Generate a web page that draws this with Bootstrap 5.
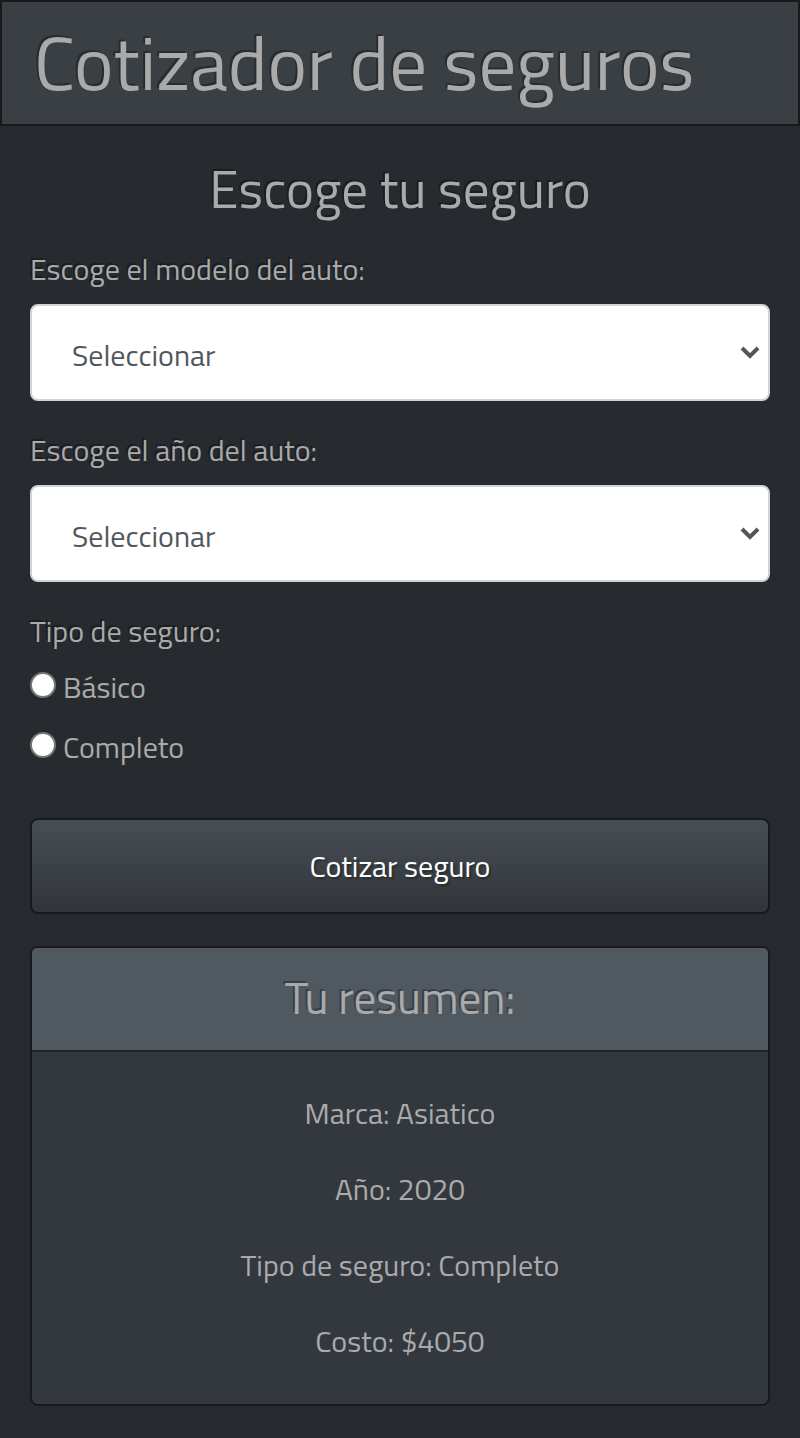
<!DOCTYPE html>
<html lang="es">
<head>
<meta charset="utf-8">
<meta name="viewport" content="width=device-width, initial-scale=1">
<title>Cotizador de seguros</title>
<link href="https://cdn.jsdelivr.net/npm/bootstrap@5.3.0/dist/css/bootstrap.min.css" rel="stylesheet">
<style>
  body {
    background: #272b30;
    color: #aaa;
    font-family: "Titillium Web", Roboto, "Open Sans", sans-serif;
    font-size: 30px;
    line-height: 44px;
  }
  h1, h2, h3, .form-label, .radio-title { text-shadow: -2px -2px 0 rgba(0, 0, 0, .3); }
  h1, h2, h3 { font-weight: 400; }
  .top-bar { background: #3a3f44; border: 2px solid #17191c; padding: 15px 32px 17px; }
  .top-bar h1 { font-size: 75px; line-height: 90px; }
  .quote-page { padding: 30px; }
  .quote-page h2 { font-size: 53px; line-height: 66px; margin-bottom: 25px; }
  .form-label, .radio-title { font-size: 30px; line-height: 44px; }
  .form-label { margin-bottom: 13px; }
  .radio-title { margin-bottom: 12px; }
  .quote-field { margin-bottom: 27px; }
  .quote-field .form-select {
    height: 97px;
    padding: 6px 40px 0;
    border: 2px solid #ced4da;
    border-radius: 8px;
    color: #52575c;
    font-size: 30px;
    background: #fff url("data:image/svg+xml,%3Csvg xmlns='http://www.w3.org/2000/svg' viewBox='0 0 20 13'%3E%3Cpath d='M2 2 10 10 18 2' fill='none' stroke='%2352575c' stroke-width='4'/%3E%3C/svg%3E") no-repeat right 8px center / 20px 13px;
  }
  .quote-radio { min-height: 44px; margin-bottom: 16px; gap: 7px; }
  .quote-radio .form-check-input {
    width: 26px; height: 26px; margin: 0 0 4px; border: 2px solid #767676; background-color: #fff;
  }
  .quote-btn {
    margin-top: 33px;
    padding: 23px;
    border: 2px solid #17191c;
    border-radius: 8px;
    color: #fff;
    font-size: 30px;
    line-height: 46px;
    background-image: linear-gradient(#484e55, #3a3f44 60%, #313539);
    text-shadow: 2px 2px 2px rgba(0, 0, 0, .3);
  }
  .quote-btn:hover { color: #fff; background-color: #3a3f44; }
  .summary-card {
    margin-top: 32px;
    background: #32383e;
    border: 2px solid #17191c;
    border-radius: 8px;
    color: #aaa;
  }
  .summary-card .card-header { background: #515960; border-bottom: 2px solid #202327; padding: 22px 24px 26px; }
  .summary-card h3 { font-size: 45px; line-height: 54px; }
  .summary-card .card-body { padding: 39px 24px 41px; }
  .summary-card p { margin-bottom: 32px; }
  .summary-card p:last-child { margin-bottom: 0; }
</style>
</head>
<body>
<header class="top-bar"><h1 class="mb-0">Cotizador de seguros</h1></header>
<main class="quote-page container-fluid">
  <h2 class="text-center">Escoge tu seguro</h2>
  <form>
    <div class="quote-field">
      <label class="form-label d-block" for="modelo">Escoge el modelo del auto:</label>
      <select class="form-select" id="modelo"><option>Seleccionar</option><option>Americano</option><option>Asiatico</option><option>Europeo</option></select>
    </div>
    <div class="quote-field">
      <label class="form-label d-block" for="anio">Escoge el año del auto:</label>
      <select class="form-select" id="anio"><option>Seleccionar</option><option>2020</option><option>2019</option></select>
    </div>
    <fieldset>
      <legend class="radio-title">Tipo de seguro:</legend>
      <div class="quote-radio d-flex align-items-center"><input class="form-check-input" type="radio" name="tipo" id="basico"><label for="basico">Básico</label></div>
      <div class="quote-radio d-flex align-items-center"><input class="form-check-input" type="radio" name="tipo" id="completo"><label for="completo">Completo</label></div>
    </fieldset>
    <button type="button" class="btn quote-btn d-block w-100">Cotizar seguro</button>
  </form>
  <section class="card summary-card text-center">
    <div class="card-header"><h3 class="mb-0">Tu resumen:</h3></div>
    <div class="card-body">
      <p>Marca: Asiatico</p>
      <p>Año: 2020</p>
      <p>Tipo de seguro: Completo</p>
      <p>Costo: $4050</p>
    </div>
  </section>
</main>
<script src="https://cdn.jsdelivr.net/npm/bootstrap@5.3.0/dist/js/bootstrap.bundle.min.js"></script>
</body>
</html>
